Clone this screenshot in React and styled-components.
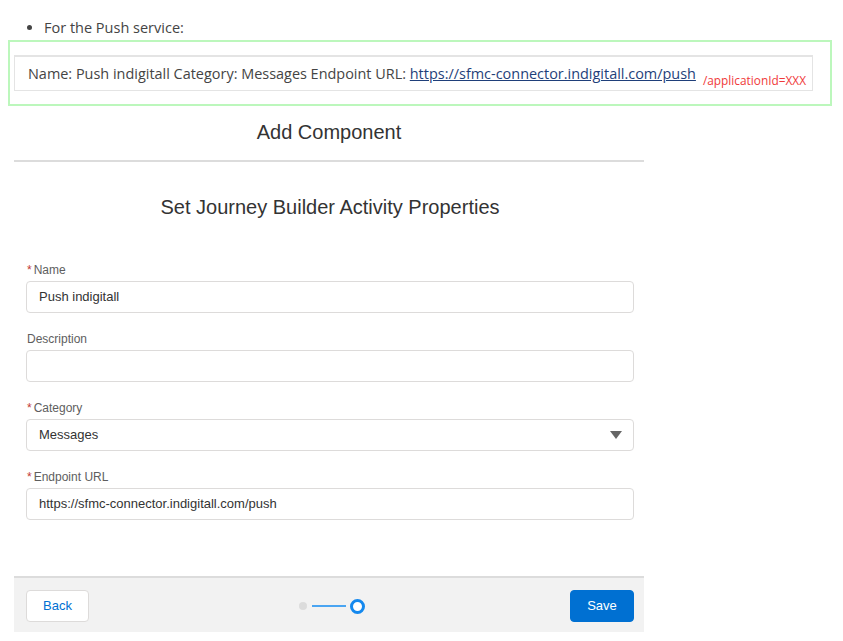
import React from "react";
import styled, { createGlobalStyle } from "styled-components";

const Global = createGlobalStyle`
  html, body { margin: 0; padding: 0; background: #fff; }
  body { font-family: "Open Sans", "Noto Sans", sans-serif; }
`;

const Page = styled.div`
  width: 824px;
  padding-left: 8px;
`;

const BulletList = styled.ul`
  margin: 0;
  padding: 18px 0 0 36px;
  font-family: "Open Sans", sans-serif;
  font-size: 14.5px;
  line-height: 20px;
  color: #444;
`;

const Highlight = styled.div`
  margin-top: 2px;
  border: 2px solid #bcf7bc;
  padding: 13px 0 13px 4px;
`;

const CodeBox = styled.div`
  box-sizing: border-box;
  width: 799px;
  height: 36px;
  border: 1px solid #e4e4e4;
  border-top-width: 2px;
  padding: 0 0 0 13px;
  display: flex;
  align-items: center;
  font-family: "Open Sans", sans-serif;
  font-size: 14.44px;
  color: #444;
  white-space: nowrap;
`;

const Link = styled.a`
  color: #1f3f7a;
  text-decoration: underline;
`;

const Red = styled.span`
  color: #f03a3a;
  font-size: 11.85px;
  margin-left: 7px;
  position: relative;
  top: 6px;
`;

const Card = styled.div`
  margin-left: 6px;
  width: 630px;
  font-family: "Liberation Sans", Arial, sans-serif;
`;

const CardHeader = styled.div`
  padding: 14px 0 16px;
  border-bottom: 2px solid #dcdcdc;
  text-align: center;
  font-size: 20px;
  line-height: 24px;
  color: #333;
`;

const CardBody = styled.div`
  padding: 33px 10px 56px 12px;
`;

const Title = styled.div`
  text-align: center;
  font-size: 20px;
  line-height: 24px;
  color: #333;
  margin-bottom: 43px;
`;

const Fields = styled.div`
  display: flex;
  flex-direction: column;
  gap: 18px;
`;

const Field = styled.div`
  display: flex;
  flex-direction: column;
`;

const Label = styled.label`
  font-size: 12px;
  line-height: 16px;
  color: #5e5e5e;
  margin-bottom: 3px;
  padding-left: 1px;
`;

const Req = styled.abbr`
  color: #c23934;
  text-decoration: none;
  margin-right: 2px;
`;

const InputBox = styled.div`
  box-sizing: border-box;
  height: 32px;
  border: 1px solid #dddbda;
  border-radius: 4px;
  background: #fff;
  padding: 0 12px 1px;
  display: flex;
  align-items: center;
  justify-content: space-between;
  font-size: 13px;
  color: #333;
`;

const Caret = styled.span`
  width: 0;
  height: 0;
  border-left: 6px solid transparent;
  border-right: 6px solid transparent;
  border-top: 8px solid #666;
  margin-right: -1px;
`;

const Footer = styled.div`
  box-sizing: border-box;
  height: 56px;
  background: #f2f2f2;
  border-top: 2px solid #dcdcdc;
  padding: 0 10px 0 12px;
  display: flex;
  align-items: center;
  justify-content: space-between;
`;

const Button = styled.button`
  box-sizing: border-box;
  height: 32px;
  width: ${(p) => p.$w}px;
  border-radius: 4px;
  font-family: "Liberation Sans", Arial, sans-serif;
  font-size: 13px;
  border: 1px solid ${(p) => (p.$primary ? "#0070d2" : "#dddbda")};
  background: ${(p) => (p.$primary ? "#0070d2" : "#fff")};
  color: ${(p) => (p.$primary ? "#fff" : "#0070d2")};
  padding: 0;
  margin-top: 1px;
`;

const Stepper = styled.div`
  display: flex;
  align-items: center;
  margin: 2px 0 0 4px;
`;

const Dot = styled.span`
  width: 8px;
  height: 8px;
  border-radius: 50%;
  background: #dcdcdc;
`;

const Line = styled.span`
  width: 34px;
  height: 2px;
  background: #4aa5f2;
  margin: 0 4px 0 5px;
`;

const Ring = styled.span`
  box-sizing: border-box;
  width: 15px;
  height: 15px;
  border-radius: 50%;
  border: 3.5px solid #1589ee;
  background: #fff;
`;

const fields = [
  { label: "Name", req: true, value: "Push indigitall" },
  { label: "Description", req: false, value: "" },
  { label: "Category", req: true, value: "Messages", select: true },
  { label: "Endpoint URL", req: true, value: "https://sfmc-connector.indigitall.com/push" },
];

export default function App() {
  return (
    <>
      <Global />
      <Page>
        <BulletList>
          <li>For the Push service:</li>
        </BulletList>
        <Highlight>
          <CodeBox>
            Name: Push indigitall Category: Messages Endpoint URL:&nbsp;
            <Link href="#">https://sfmc-connector.indigitall.com/push</Link>
            <Red>/applicationId=XXX</Red>
          </CodeBox>
        </Highlight>
        <Card>
          <CardHeader>Add Component</CardHeader>
          <CardBody>
            <Title>Set Journey Builder Activity Properties</Title>
            <Fields>
              {fields.map((f) => (
                <Field key={f.label}>
                  <Label>
                    {f.req && <Req>*</Req>}
                    {f.label}
                  </Label>
                  <InputBox>
                    <span>{f.value}</span>
                    {f.select && <Caret />}
                  </InputBox>
                </Field>
              ))}
            </Fields>
          </CardBody>
          <Footer>
            <Button $w={63}>Back</Button>
            <Stepper>
              <Dot />
              <Line />
              <Ring />
            </Stepper>
            <Button $w={64} $primary>Save</Button>
          </Footer>
        </Card>
      </Page>
    </>
  );
}
